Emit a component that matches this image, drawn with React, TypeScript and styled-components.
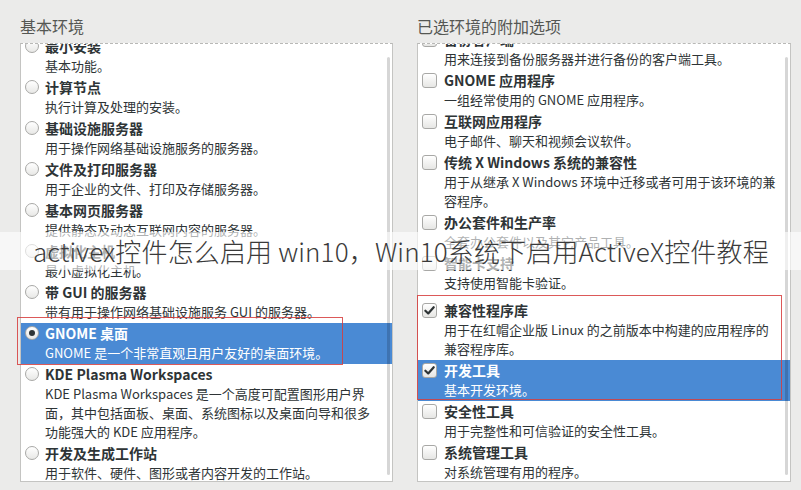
import styled, { createGlobalStyle } from 'styled-components'

type Item = {
  title: string
  desc: string[]
  checked?: boolean
  selected?: boolean
  gapTop?: boolean
}

const ENVIRONMENTS: Item[] = [
  { title: '最小安装', desc: ['基本功能。'] },
  { title: '计算节点', desc: ['执行计算及处理的安装。'] },
  { title: '基础设施服务器', desc: ['用于操作网络基础设施服务的服务器。'] },
  { title: '文件及打印服务器', desc: ['用于企业的文件、打印及存储服务器。'] },
  { title: '基本网页服务器', desc: ['提供静态及动态互联网内容的服务器。'] },
  { title: '虚拟化主机', desc: ['最小虚拟化主机。'] },
  { title: '带 GUI 的服务器', desc: ['带有用于操作网络基础设施服务 GUI 的服务器。'] },
  {
    title: 'GNOME 桌面',
    desc: ['GNOME 是一个非常直观且用户友好的桌面环境。'],
    checked: true,
    selected: true,
  },
  {
    title: 'KDE Plasma Workspaces',
    desc: [
      'KDE Plasma Workspaces 是一个高度可配置图形用户界',
      '面，其中包括面板、桌面、系统图标以及桌面向导和很多',
      '功能强大的 KDE 应用程序。',
    ],
  },
  { title: '开发及生成工作站', desc: ['用于软件、硬件、图形或者内容开发的工作站。'] },
]

const ADDONS: Item[] = [
  { title: '备份客户端', desc: ['用来连接到备份服务器并进行备份的客户端工具。'] },
  { title: 'GNOME 应用程序', desc: ['一组经常使用的 GNOME 应用程序。'] },
  { title: '互联网应用程序', desc: ['电子邮件、聊天和视频会议软件。'] },
  {
    title: '传统 X Windows 系统的兼容性',
    desc: ['用于从继承 X Windows 环境中迁移或者可用于该环境的兼', '容程序。'],
  },
  { title: '办公套件和生产率', desc: ['全套办公套件以及其它产品工具。'] },
  { title: '智能卡支持', desc: ['支持使用智能卡验证。'] },
  {
    title: '兼容性程序库',
    desc: ['用于在红帽企业版 Linux 的之前版本中构建的应用程序的', '兼容程序库。'],
    checked: true,
    gapTop: true,
  },
  { title: '开发工具', desc: ['基本开发环境。'], checked: true, selected: true },
  { title: '安全性工具', desc: ['用于完整性和可信验证的安全性工具。'] },
  { title: '系统管理工具', desc: ['对系统管理有用的程序。'] },
]

const Check = () => (
  <svg width='11' height='11' viewBox='0 0 12 12'>
    <path d='M1.5 6.2 L4.6 9.2 L10.6 2.4' fill='none' stroke='#2e3436' strokeWidth='2.4' strokeLinecap='round' strokeLinejoin='round' />
  </svg>
)

const App = () => {
  return (
    <>
      <GlobalStyle />
      <Page>
        <Column $width={373}>
          <Heading>基本环境</Heading>
          <Panel>
            <List $offset={-8}>
              {ENVIRONMENTS.map((item) => (
                <Row key={item.title} $selected={item.selected} $marker={20}>
                  <Radio $on={item.checked} />
                  <Texts>
                    <Title>{item.title}</Title>
                    {item.desc.map((line) => (
                      <Desc key={line}>{line}</Desc>
                    ))}
                  </Texts>
                </Row>
              ))}
            </List>
            <Scrollbar />
          </Panel>
        </Column>

        <Column $width={374}>
          <Heading>已选环境的附加选项</Heading>
          <Panel>
            <List $offset={-15}>
              {ADDONS.map((item) => (
                <Row
                  key={item.title}
                  $selected={item.selected}
                  $gapTop={item.gapTop}
                  $marker={22}
                >
                  <Checkbox>{item.checked && <Check />}</Checkbox>
                  <Texts>
                    <Title>{item.title}</Title>
                    {item.desc.map((line) => (
                      <Desc key={line}>{line}</Desc>
                    ))}
                  </Texts>
                </Row>
              ))}
            </List>
            <Scrollbar />
          </Panel>
        </Column>

        <Mark style={{ left: 17, top: 317, width: 326, height: 48 }} />
        <Mark style={{ left: 417, top: 295, width: 365, height: 105 }} />

        <Banner>
          <BannerText>activex控件怎么启用 win10，Win10系统下启用ActiveX控件教程</BannerText>
        </Banner>
      </Page>
    </>
  )
}

const GlobalStyle = createGlobalStyle`
  html, body {
    margin: 0;
    padding: 0;
    background: #ebebea;
  }
  body {
    font-family: 'Noto Sans CJK SC', 'Noto Sans', sans-serif;
    color: #2e3436;
  }
`

const Page = styled.main`
  position: relative;
  width: 801px;
  height: 490px;
  overflow: hidden;
  box-sizing: border-box;
  padding: 16px 0 8px 20px;
  display: flex;
  align-items: stretch;
  gap: 24px;
`

const Column = styled.section<{ $width: number }>`
  flex: 0 0 ${(p) => p.$width}px;
  width: ${(p) => p.$width}px;
  max-width: ${(p) => p.$width}px;
  display: flex;
  flex-direction: column;
  min-height: 0;
  min-width: 0;
`

const Heading = styled.h2`
  margin: 0 0 7px;
  font-size: 16px;
  line-height: 20px;
  font-weight: 400;
  color: #555753;
`

const Panel = styled.div`
  position: relative;
  flex: 1;
  min-width: 0;
  box-sizing: border-box;
  background: #ffffff;
  border: 1px solid #c4c4c2;
  border-top: 1px dashed #b8b8b6;
  overflow: hidden;
`

const List = styled.ul<{ $offset: number }>`
  list-style: none;
  margin: ${(p) => p.$offset}px 0 0;
  padding: 0;
`

const Row = styled.li<{ $selected?: boolean; $gapTop?: boolean; $marker: number }>`
  display: grid;
  grid-template-columns: ${(p) => p.$marker}px minmax(0, 1fr);
  align-items: start;
  padding: 0 0 2px 4px;
  margin-top: ${(p) => (p.$gapTop ? '6px' : '0')};
  background: ${(p) => (p.$selected ? '#4a8ad4' : 'transparent')};
  color: ${(p) => (p.$selected ? '#ffffff' : '#2e3436')};
`

const Radio = styled.span<{ $on?: boolean }>`
  position: relative;
  margin-top: 3px;
  width: 14px;
  height: 14px;
  box-sizing: border-box;
  border-radius: 50%;
  border: 1px solid #a8a8a6;
  background: linear-gradient(#ffffff, #e8e8e6);

  &::after {
    content: '';
    display: ${(p) => (p.$on ? 'block' : 'none')};
    position: absolute;
    left: 3px;
    top: 3px;
    width: 6px;
    height: 6px;
    border-radius: 50%;
    background: #2e3436;
  }
`

const Checkbox = styled.span`
  display: flex;
  align-items: center;
  justify-content: center;
  margin-top: 3px;
  width: 15px;
  height: 15px;
  box-sizing: border-box;
  border-radius: 3px;
  border: 1px solid #a8a8a6;
  background: linear-gradient(#ffffff, #e6e6e4);
`

const Texts = styled.div`
  display: flex;
  flex-direction: column;
  white-space: nowrap;
  min-width: 0;
`

const Title = styled.div`
  font-size: 14px;
  line-height: 20px;
  font-weight: 700;
`

const Desc = styled.div`
  font-size: 13px;
  line-height: 19px;
`

const Scrollbar = styled.div`
  position: absolute;
  right: 2px;
  top: 13px;
  bottom: 6px;
  width: 3px;
  border-radius: 2px;
  background: rgba(0, 0, 0, 0.16);
`

const Mark = styled.div`
  position: absolute;
  box-sizing: border-box;
  border: 1px solid rgba(214, 60, 60, 0.85);
  pointer-events: none;
`

const Banner = styled.div`
  position: absolute;
  left: 0;
  right: 0;
  top: 232px;
  height: 38px;
  display: flex;
  align-items: center;
  padding-left: 33px;
  background: rgba(255, 255, 255, 0.62);
`

const BannerText = styled.span`
  font-size: 26px;
  font-weight: 300;
  letter-spacing: 0.15px;
  line-height: 1;
  color: #3a3a3a;
  white-space: nowrap;
`

export default App
